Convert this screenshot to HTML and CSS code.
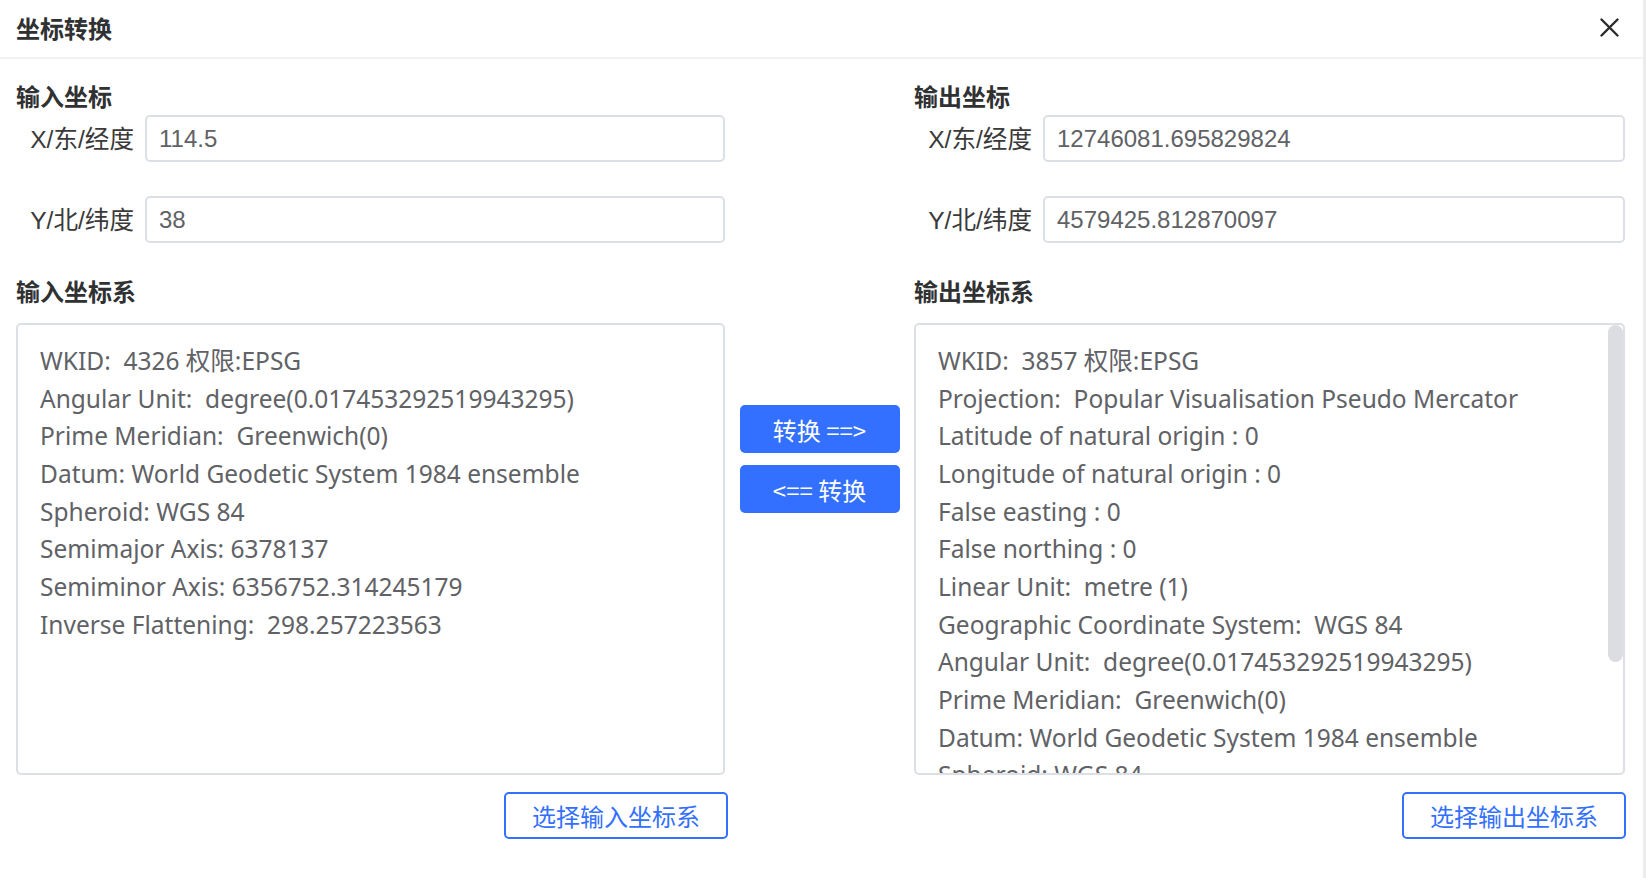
FILE: index.html
```html
<!DOCTYPE html>
<html lang="zh-CN">
<head>
<meta charset="utf-8">
<title>坐标转换</title>
<link rel="stylesheet" href="styles.css">
</head>
<body>
<div class="dialog">
  <header class="dlg-header">
    <span class="dlg-title">坐标转换</span>
    <button class="dlg-close" type="button" aria-label="关闭">
      <svg width="19" height="19" viewBox="0 0 19 19"><path d="M1.5 1.5 L17.5 17.5 M17.5 1.5 L1.5 17.5" stroke="#2b2b2b" stroke-width="2.4" stroke-linecap="round" fill="none"/></svg>
    </button>
  </header>
  <div class="dlg-body">
    <section class="panel panel-left">
      <h3 class="sec-title">输入坐标</h3>
      <div class="field"><label class="field-label">X/东/经度</label><input class="field-input" value="114.5"></div>
      <div class="field field-second"><label class="field-label">Y/北/纬度</label><input class="field-input" value="38"></div>
      <h3 class="sec-title sec-title-crs">输入坐标系</h3>
      <div class="crs-box">
        <div class="crs-line">WKID:  4326 权限:EPSG</div>
        <div class="crs-line">Angular Unit:  degree(0.017453292519943295)</div>
        <div class="crs-line">Prime Meridian:  Greenwich(0)</div>
        <div class="crs-line">Datum: World Geodetic System 1984 ensemble</div>
        <div class="crs-line">Spheroid: WGS 84</div>
        <div class="crs-line">Semimajor Axis: 6378137</div>
        <div class="crs-line">Semiminor Axis: 6356752.314245179</div>
        <div class="crs-line">Inverse Flattening:  298.257223563</div>
      </div>
      <div class="actions"><button class="btn-outline" type="button">选择输入坐标系</button></div>
    </section>
    <div class="middle">
      <button class="btn-primary" type="button">转换 ==&gt;</button>
      <button class="btn-primary" type="button">&lt;== 转换</button>
    </div>
    <section class="panel panel-right">
      <h3 class="sec-title">输出坐标</h3>
      <div class="field"><label class="field-label">X/东/经度</label><input class="field-input" value="12746081.695829824"></div>
      <div class="field field-second"><label class="field-label">Y/北/纬度</label><input class="field-input" value="4579425.812870097"></div>
      <h3 class="sec-title sec-title-crs">输出坐标系</h3>
      <div class="crs-box crs-box-scroll">
        <div class="crs-line">WKID:  3857 权限:EPSG</div>
        <div class="crs-line">Projection:  Popular Visualisation Pseudo Mercator</div>
        <div class="crs-line">Latitude of natural origin : 0</div>
        <div class="crs-line">Longitude of natural origin : 0</div>
        <div class="crs-line">False easting : 0</div>
        <div class="crs-line">False northing : 0</div>
        <div class="crs-line">Linear Unit:  metre (1)</div>
        <div class="crs-line">Geographic Coordinate System:  WGS 84</div>
        <div class="crs-line">Angular Unit:  degree(0.017453292519943295)</div>
        <div class="crs-line">Prime Meridian:  Greenwich(0)</div>
        <div class="crs-line">Datum: World Geodetic System 1984 ensemble</div>
        <div class="crs-line">Spheroid: WGS 84</div>
        <div class="crs-line">Semimajor Axis: 6378137</div>
        <div class="crs-line">Semiminor Axis: 6356752.314245179</div>
        <div class="crs-line">Inverse Flattening:  298.257223563</div>
        <div class="scroll-thumb"></div>
      </div>
      <div class="actions actions-right"><button class="btn-outline" type="button">选择输出坐标系</button></div>
    </section>
  </div>
</div>
</body>
</html>
```

FILE: styles.css
```css
* { box-sizing: border-box; }

html, body {
  margin: 0;
  padding: 0;
  background: #ffffff;
}

body {
  font-family: "Liberation Sans", "Noto Sans CJK SC", Arial, sans-serif;
  color: #303133;
  width: 1646px;
  height: 878px;
  overflow: hidden;
}

.dialog {
  width: 1646px;
  height: 878px;
  border-right: 3px solid #ececec;
  background: #fff;
}

.dlg-header {
  height: 59px;
  border-bottom: 2px solid #f2f2f2;
  display: flex;
  align-items: center;
  justify-content: space-between;
  padding: 0 24px 2px 16px;
}

.dlg-title {
  font-family: "Noto Sans CJK SC", sans-serif;
  font-weight: 700;
  font-size: 24px;
  line-height: 32px;
  color: #303133;
}

.dlg-close {
  border: 0;
  background: transparent;
  padding: 0;
  width: 19px;
  height: 19px;
  display: flex;
  cursor: pointer;
}

.dlg-body {
  display: flex;
  align-items: center;
  padding: 21px 0 0 16px;
}

.panel {
  display: flex;
  flex-direction: column;
}

.panel-left { width: 709px; }
.panel-right { width: 711px; }

.sec-title {
  margin: 0;
  font-family: "Noto Sans CJK SC", sans-serif;
  font-weight: 700;
  font-size: 24px;
  line-height: 32px;
  color: #303133;
}

.sec-title-crs { margin-top: 32px; }

.field {
  display: flex;
  align-items: center;
  margin-top: 3px;
}

.field-second { margin-top: 34px; }

.field-label {
  width: 129px;
  flex: none;
  text-align: right;
  padding: 0 11px 4px 0;
  font-size: 24.6px;
  color: #3a3a3a;
  white-space: nowrap;
}

.field-input {
  flex: 1;
  height: 47px;
  border: 2px solid #dcdfe6;
  border-radius: 5px;
  padding: 0 12px;
  font-family: "Liberation Sans", Arial, sans-serif;
  font-size: 24px;
  color: #606266;
  background: #fff;
  outline: none;
}

.crs-box {
  position: relative;
  margin-top: 16px;
  height: 452px;
  border: 2px solid #dcdfe6;
  border-radius: 5px;
  padding: 17px 22px;
  overflow: hidden;
  font-family: "Noto Sans", "Noto Sans CJK SC", sans-serif;
  font-size: 24.5px;
  line-height: 37.65px;
  color: #606266;
}

.crs-line { white-space: pre; }

.scroll-thumb {
  position: absolute;
  top: 0;
  right: 0;
  width: 15px;
  height: 337px;
  background: #dcdde1;
  border-radius: 8px;
}

.actions {
  display: flex;
  justify-content: flex-end;
  margin-top: 17px;
  margin-right: -3px;
}

.actions-right { margin-right: -1px; }

.btn-outline {
  width: 224px;
  height: 47px;
  border: 2px solid #3370ff;
  border-radius: 5px;
  background: #fff;
  color: #3370ff;
  font-family: "Noto Sans CJK SC", sans-serif;
  font-size: 24px;
  padding: 0;
  cursor: pointer;
}

.middle {
  width: 189px;
  flex: none;
  display: flex;
  flex-direction: column;
  align-items: center;
  gap: 12px;
  margin-top: -1px;
}

.btn-primary {
  width: 160px;
  height: 48px;
  border: 0;
  border-radius: 5px;
  background: #3370ff;
  color: #fff;
  font-family: "Noto Sans CJK SC", sans-serif;
  font-size: 24px;
  padding: 0;
  cursor: pointer;
}
```
